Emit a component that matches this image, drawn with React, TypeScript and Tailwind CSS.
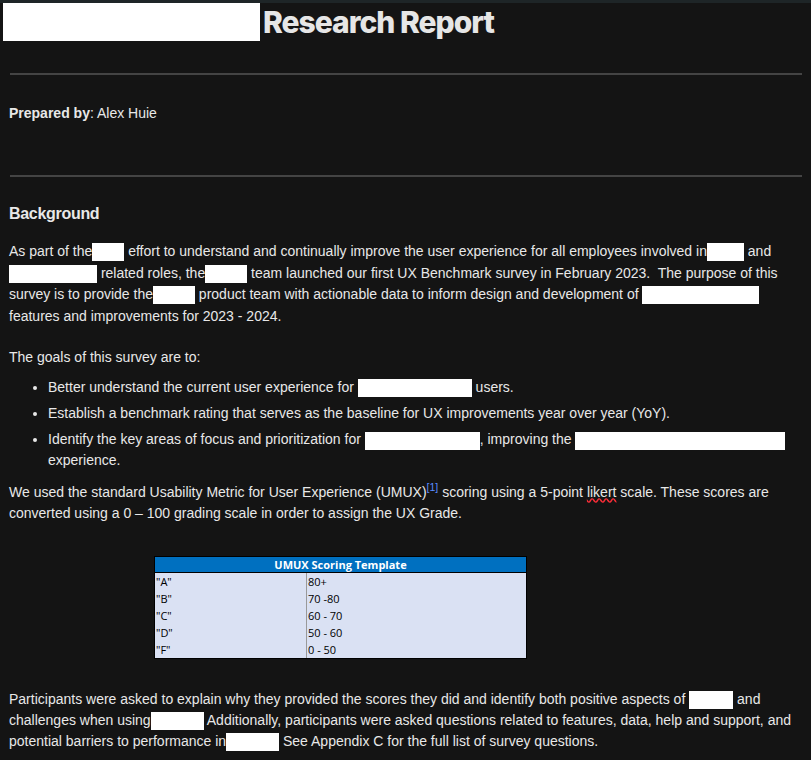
import React from "react";

const R = ({ w }: { w: number }) => (
  <span className="inline-block bg-white align-middle h-[18px]" style={{ width: w }} />
);

export default function App() {
  const rows = [["\"A\"", "80+"], ["\"B\"", "70 -80"], ["\"C\"", "60 - 70"], ["\"D\"", "50 - 60"], ["\"F\"", "0 - 50"]];
  return (
    <div className="w-[811px] h-[760px] overflow-hidden bg-[#141414] text-[#e8e8e8] border-t-[3px] border-[#1e2527]" style={{ fontFamily: '"Liberation Sans", Arial, sans-serif' }}>
      <div className="flex items-center h-[38px]">
        <span className="inline-block bg-white w-[257px] h-[38px] ml-[3px]" />
        <h1 className="ml-[3px] text-[30px] font-extrabold tracking-[-1px] leading-none text-[#e6e6e6]" style={{ fontFamily: 'Inter, "Liberation Sans", sans-serif' }}>Research Report</h1>
      </div>
      <div className="px-[9px]">
        <hr className="mt-[32px] border-t-2 border-[#444] ml-[1px]" />
        <p className="mt-[28px] text-[14px]"><b>Prepared by</b>: Alex Huie</p>
        <hr className="mt-[51px] border-t-2 border-[#444] ml-[1px]" />
        <h2 className="mt-[25px] text-[16px] font-bold tracking-[-0.3px]">Background</h2>
        <p className="mt-[15px] text-[14px] leading-[21.5px]">
          As part of the<R w={32} /> effort to understand and continually improve the user experience for all employees involved in<R w={37} /> and{" "}
          <R w={88} /> related roles, the<R w={42} /> team launched our first UX Benchmark survey in February 2023.&nbsp; The purpose of this survey is to provide the<R w={42} /> product team with actionable data to inform design and development of <R w={117} /> features and improvements for 2023 - 2024.
        </p>
        <p className="mt-[20px] text-[14px]">The goals of this survey are to:</p>
        <ul className="mt-[9px] ml-[21px] list-disc pl-[18px] text-[14px] leading-[20px] space-y-[6px]">
          <li>Better understand the current user experience for <R w={114} /> users.</li>
          <li>Establish a benchmark rating that serves as the baseline for UX improvements year over year (YoY).</li>
          <li>Identify the key areas of focus and prioritization for <R w={115} />, improving the <R w={210} /> experience.</li>
        </ul>
        <p className="mt-[12px] text-[14px] leading-[21px]">
          We used the standard Usability Metric for User Experience (UMUX)<sup className="text-[#5b8cff]">[1]</sup> scoring using a 5-point <span className="underline decoration-wavy decoration-red-500">likert</span> scale. These scores are converted using a 0 – 100 grading scale in order to assign the UX Grade.
        </p>
        <div className="mt-[32px] ml-[145px] w-[373px] border border-black text-[11px] text-black" style={{ fontFamily: '"Open Sans", Calibri, sans-serif' }}>
          <div className="bg-[#0070c0] text-white font-bold text-center h-[16px] leading-[16px] border-b border-black">UMUX Scoring Template</div>
          <div className="bg-[#dae1f3]">
            {rows.map(([a, b]) => (
              <div key={a} className="flex h-[17px] leading-[17px]">
                <div className="w-[152px] pl-[1px] border-r border-[#999]">{a}</div>
                <div className="pl-[1px]">{b}</div>
              </div>
            ))}
          </div>
        </div>
        <p className="mt-[30px] text-[14px] leading-[21px]">
          Participants were asked to explain why they provided the scores they did and identify both positive aspects of <R w={44} /> and challenges when using<R w={53} /> Additionally, participants were asked questions related to features, data, help and support, and potential barriers to performance in<R w={53} /> See Appendix C for the full list of survey questions.
        </p>
      </div>
    </div>
  );
}
